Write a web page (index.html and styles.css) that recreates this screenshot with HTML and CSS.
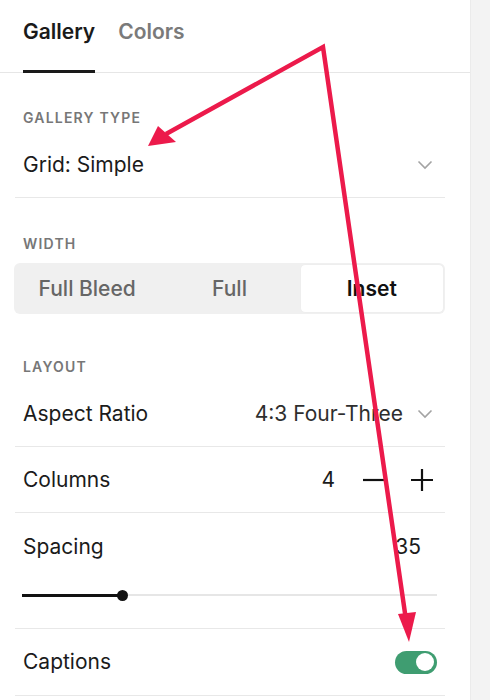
FILE: index.html
```html
<!DOCTYPE html>
<html>
<head>
<meta charset="utf-8">
<link rel="stylesheet" href="styles.css">
</head>
<body>
<div class="app">
  <div class="panel">
    <div class="tabs">
      <div class="tab active">Gallery</div>
      <div class="tab">Colors</div>
    </div>
    <div class="content">
      <div class="label first">Gallery Type</div>
      <div class="row">
        <span>Grid: Simple</span>
        <span class="value">
          <svg class="chev" width="16" height="10" viewBox="0 0 16 10"><path d="M1.5 1.5 L8 8 L14.5 1.5" fill="none" stroke="#a3a3a3" stroke-width="1.6"/></svg>
        </span>
      </div>

      <div class="label">Width</div>
      <div class="segmented">
        <div class="seg">Full Bleed</div>
        <div class="seg">Full</div>
        <div class="seg active">Inset</div>
      </div>

      <div class="label layout">Layout</div>
      <div class="row">
        <span>Aspect Ratio</span>
        <span class="value">
          <span class="valtext">4:3 Four-Three</span>
          <svg class="chev" width="16" height="10" viewBox="0 0 16 10"><path d="M1.5 1.5 L8 8 L14.5 1.5" fill="none" stroke="#a3a3a3" stroke-width="1.6"/></svg>
        </span>
      </div>
      <div class="row">
        <span>Columns</span>
        <span class="value stepper">
          <span class="num">4</span>
          <svg width="22" height="22" viewBox="0 0 22 22"><path d="M0 11 H22" stroke="#111" stroke-width="2.2"/></svg>
          <svg width="22" height="22" viewBox="0 0 22 22"><path d="M0 11 H22 M11 0 V22" stroke="#111" stroke-width="2.2"/></svg>
        </span>
      </div>
      <div class="row spacing">
        <div class="spacing-head">
          <span>Spacing</span>
          <span class="value num35">35</span>
        </div>
        <div class="slider">
          <div class="fill"></div>
          <div class="thumb"></div>
          <div class="rest"></div>
        </div>
      </div>
      <div class="row last">
        <span>Captions</span>
        <span class="value">
          <span class="toggle"><span class="knob"></span></span>
        </span>
      </div>
    </div>
  </div>
  <div class="strip"></div>

  <svg class="annot" width="490" height="700" viewBox="0 0 490 700">
    <polyline points="166,134 323,47 406,620" fill="none" stroke="#ec1a4b" stroke-width="4.5" stroke-linejoin="miter"/>
    <polygon points="148,146 158,126 176,142" fill="#ec1a4b"/>
    <polygon points="409,642 398,614 416,612" fill="#ec1a4b"/>
  </svg>
</div>
</body>
</html>
```

FILE: styles.css
```css
html, body {
  margin: 0;
  padding: 0;
  background: #fff;
}

body {
  font-family: Inter, "Liberation Sans", sans-serif;
  color: #1b1b1b;
}

.app {
  position: relative;
  display: flex;
  width: 490px;
  height: 700px;
  overflow: hidden;
}

.panel {
  width: 470px;
  flex: none;
  background: #fff;
}

.strip {
  flex: 1;
  background: #f3f3f3;
  border-left: 1px solid #ebebeb;
}

.tabs {
  display: flex;
  gap: 23px;
  padding-left: 23px;
  height: 72px;
  border-bottom: 1px solid #e6e6e6;
}

.tab {
  box-sizing: border-box;
  height: 73px;
  padding-top: 20px;
  font-size: 21px;
  line-height: 24px;
  font-weight: 600;
  color: #7a7a7a;
  border-bottom: 3px solid transparent;
}

.tab.active {
  color: #1a1a1a;
  border-bottom-color: #1a1a1a;
}

.content {
  padding: 0 25px 0 15px;
}

.label {
  font-size: 14px;
  line-height: 16px;
  font-weight: 600;
  letter-spacing: 1.2px;
  text-transform: uppercase;
  color: #777;
  padding-left: 8px;
  margin: 38px 0 6px;
}

.label.first {
  margin-top: 37px;
}

.label.layout {
  margin-top: 45px;
}

.row {
  display: flex;
  align-items: center;
  height: 65px;
  padding: 0 8px;
  border-bottom: 1px solid #e8e8e8;
  font-size: 21px;
  line-height: 24px;
}

.row.last {
  height: 66px;
}

.value {
  margin-left: auto;
  display: flex;
  align-items: center;
  gap: 14px;
}

.valtext {
  color: #2e2e2e;
}

.chev {
  margin-right: 4px;
}

.stepper {
  gap: 26px;
  margin-right: 4px;
}

.stepper .num {
  margin-right: 2px;
}

.segmented {
  display: grid;
  grid-template-columns: 1fr 1fr 1fr;
  height: 51px;
  box-sizing: border-box;
  padding: 2px;
  margin-left: -1px;
  margin-top: 11px;
  background: #f0f0f0;
  border-radius: 6px;
}

.seg {
  display: flex;
  align-items: center;
  justify-content: center;
  font-size: 21px;
  font-weight: 500;
  color: #666;
  border-radius: 4px;
}

.seg.active {
  background: #fff;
  color: #111;
  font-weight: 600;
  box-shadow: 0 0 1px rgba(0, 0, 0, 0.08);
}

.row.spacing {
  height: 116px;
  flex-direction: column;
  align-items: stretch;
  box-sizing: border-box;
  padding-top: 22px;
}

.spacing-head {
  display: flex;
  align-items: center;
}

.num35 {
  margin-right: 16px;
}

.slider {
  display: flex;
  align-items: center;
  height: 12px;
  margin-top: 30px;
  margin-left: -1px;
}

.fill {
  width: 100px;
  height: 3px;
  background: #111;
  flex: none;
}

.thumb {
  width: 11px;
  height: 11px;
  border-radius: 50%;
  background: #111;
  margin-left: -5px;
  flex: none;
  position: relative;
  z-index: 1;
}

.rest {
  flex: 1;
  height: 2px;
  background: #e6e6e6;
  margin-left: -6px;
}

.toggle {
  box-sizing: border-box;
  display: flex;
  align-items: center;
  justify-content: flex-end;
  width: 42px;
  height: 23px;
  padding: 0 3px;
  border-radius: 12px;
  background: #3f9d71;
}

.knob {
  width: 18px;
  height: 18px;
  border-radius: 50%;
  background: #fff;
}

.annot {
  position: absolute;
  left: 0;
  top: 0;
  pointer-events: none;
}
```
